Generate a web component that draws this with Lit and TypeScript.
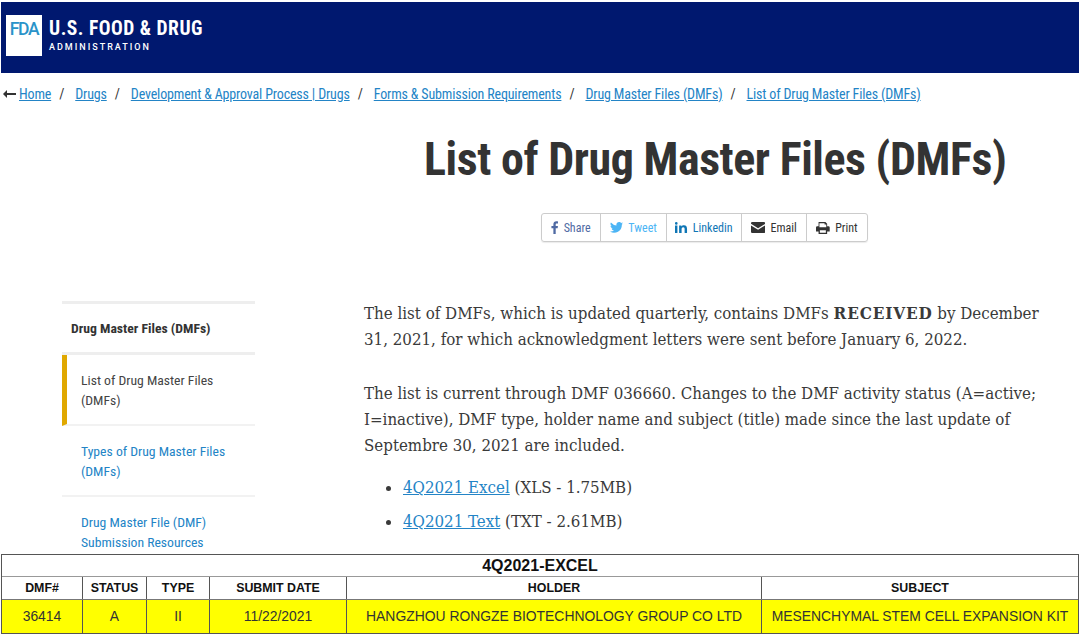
import { LitElement, html, css } from "lit";
import { customElement } from "lit/decorators.js";

@customElement("app-root")
export class AppRoot extends LitElement {
  static styles = css`
    :host { display: flex; flex-direction: column; width: 1080px; height: 637px; overflow: hidden; background: #fff; box-sizing: border-box; font-family: Roboto, "Liberation Sans", sans-serif; color: #333; }
    a { color: #2384c6; }
    .banner { margin: 2px 1px 0; height: 71px; flex: none; background: #00186f; display: flex; align-items: flex-start; padding: 13px 0 0 5px; box-sizing: border-box; gap: 7px; color: #fff; }
    .logo { width: 36px; height: 41px; background: #fff; display: flex; align-items: center; justify-content: center; color: #2a93c9; font: 500 17.500px Roboto, sans-serif; letter-spacing: -1.300px; padding-bottom: 13px; box-sizing: border-box; }
    .wordmark { display: flex; flex-direction: column; }
    .agency { font: 700 19.500px/24px Roboto, sans-serif; font-stretch: 85%; letter-spacing: .5px; white-space: nowrap; margin-top: 2px; }
    .adm { font: 500 9px/10px Roboto, sans-serif; letter-spacing: 2px; margin-top: 1px; }
    .crumbs { flex: none; height: 42px; display: flex; align-items: center; padding: 0 0 0 2px; font-size: 14px; font-stretch: 75%; letter-spacing: -.16px; white-space: nowrap; }
    .arrow { width: 14px; height: 10px; margin-right: 3px; color: #333; }
    .sep { margin: 0 11px 0 8px; }
    h1 { flex: none; margin: 0; height: 98px; width: 1080px; padding: 9px 0 0 424px; box-sizing: border-box; font: 700 46px/70px Roboto, sans-serif; font-stretch: 75%; letter-spacing: -.45px; color: #333; white-space: nowrap; }
    .share { flex: none; margin: 0 0 0 541px; height: 27px; width: fit-content; display: flex; border: 1px solid #ccc; border-radius: 3px; font-size: 12px; font-stretch: 75%; box-shadow: 0 1px 1px rgba(0,0,0,.08); }
    .share span { display: flex; align-items: center; justify-content: center; gap: 5px; border-left: 1px solid #ccc; white-space: nowrap; }
    .share span:first-child { border-left: 0; }
    .share svg { display: block; flex: none; }
    .fb { color: #4f6aa3; width: 58px; } .tw { color: #4cb5f5; width: 65px; } .li { color: #0f76b5; width: 74px; } .em { color: #333; width: 64px; } .pr { color: #333; width: 60px; }
    .fb svg { height: 13px; } .tw svg { height: 11px; } .li svg { height: 11px; } .em svg { height: 11px; } .pr svg { height: 12px; }
    .main { flex: 1; min-height: 0; overflow: hidden; display: grid; grid-template-columns: 193px 1fr; column-gap: 109px; padding: 59px 0 0 62px; }
    .side { font-size: 13.700px; font-stretch: 75%; line-height: 20.300px; }
    .side-head { border-top: 3px solid #eee; border-bottom: 3px solid #eee; height: 48px; display: flex; align-items: center; padding-left: 9px; font-weight: 700; color: #333; }
    .side-item { padding: 15px 20px 13px 19px; border-bottom: 2px solid #f2f2f2; color: #2384c6; height: 41px; }
    .side-item.active { color: #444; border-left: 5px solid #e0a800; padding-left: 14px; }
    .body { font: 16.750px/26.300px "DejaVu Serif Condensed", "DejaVu Serif", serif; width: 680px; color: #3a3a3a; }
    .body b { font-size: 17px; letter-spacing: .85px; }
    .body p { margin: 0 0 27px; }
    .body p.first { margin-top: -1px; }
    .body p.last { margin-bottom: 16px; }
    ul { margin: 0; padding-left: 39px; }
    li { margin-bottom: 7.500px; }
    .bar { flex: none; margin: 0 1px 3px; border: 1px solid #555; font-family: "Liberation Sans", Arial, sans-serif; color: #111; box-sizing: border-box; background: #fff; }
    .t-title { height: 22px; text-align: center; font-weight: 700; font-size: 16px; line-height: 22px; border-bottom: 1px solid #999; box-sizing: border-box; }
    .t-row { display: grid; grid-template-columns: 80px 64px 63px 137px 415px 1fr; }
    .t-row > div { display: flex; align-items: center; justify-content: center; border-left: 1px solid #555; white-space: nowrap; }
    .t-row > div:first-child { border-left: 0; }
    .t-head { height: 23px; font-weight: 700; font-size: 12.400px; border-bottom: 1px solid #777; box-sizing: border-box; }
    .t-data { height: 33px; font-size: 13.900px; background: #ff0; box-sizing: border-box; color: #333; }
    .t-data > div { padding-bottom: 2px; box-sizing: border-box; }
  `;

  render() {
    const crumbs = ["Drugs", "Development & Approval Process | Drugs", "Forms & Submission Requirements", "Drug Master Files (DMFs)", "List of Drug Master Files (DMFs)"];
    return html`
      <div class="banner">
        <div class="logo">FDA</div>
        <div class="wordmark">
          <div class="agency">U.S. FOOD &amp; DRUG</div>
          <div class="adm">ADMINISTRATION</div>
        </div>
      </div>
      <nav class="crumbs">
        <svg class="arrow" viewBox="0 0 14 10"><path d="M5 1 1 5l4 4V6h9V4H5z" fill="currentColor"/></svg>
        <a href="#">Home</a><span class="sep">/</span>
        ${crumbs.map((c, i) => html`<a href="#">${c}</a>${i < crumbs.length - 1 ? html`<span class="sep">/</span>` : ""}`)}
      </nav>
      <h1>List of Drug Master Files (DMFs)</h1>
      <div class="share">
        <span class="fb"><svg viewBox="0 0 10 18"><path fill="currentColor" d="M6.500 18V10h2.700l.4-3.100H6.500V4.900c0-.9.3-1.500 1.600-1.500h1.600V.6C9.400.6 8.400.5 7.300.5 4.900.5 3.300 2 3.300 4.600V6.900H.6V10h2.700v8z"/></svg>Share</span>
        <span class="tw"><svg viewBox="0 0 24 20"><path fill="currentColor" d="M24 2.400a9.800 9.800 0 0 1-2.800.8A5 5 0 0 0 23.300.5a9.800 9.800 0 0 1-3.100 1.200 4.900 4.900 0 0 0-8.400 4.500A14 14 0 0 1 1.700 1a4.900 4.900 0 0 0 1.500 6.600 4.900 4.900 0 0 1-2.200-.6c0 2.400 1.700 4.400 3.900 4.900a4.900 4.900 0 0 1-2.200.1 4.900 4.900 0 0 0 4.600 3.400A9.900 9.900 0 0 1 0 17.400 14 14 0 0 0 21.500 5c1-.7 1.900-1.600 2.500-2.600z"/></svg>Tweet</span>
        <span class="li"><svg viewBox="0 0 18 16"><path fill="currentColor" d="M0 5h3.500v11H0zM1.800 0a2 2 0 1 1 0 4 2 2 0 0 1 0-4zM6 5h3.300v1.500C10 5.400 11.300 4.700 13 4.700c3.500 0 4.500 2.200 4.500 5.300v6H14v-5.300c0-1.500-.3-2.900-2-2.900s-2.400 1.200-2.400 2.900V16H6z"/></svg>Linkedin</span>
        <span class="em"><svg viewBox="0 0 18 14"><path fill="currentColor" d="M1.500 0h15A1.500 1.500 0 0 1 18 1.500v.8L9 8 0 2.300v-.8A1.500 1.500 0 0 1 1.500 0zM0 4.300 9 10l9-5.700v8.200a1.500 1.500 0 0 1-1.500 1.500h-15A1.500 1.500 0 0 1 0 12.500z"/></svg>Email</span>
        <span class="pr"><svg viewBox="0 0 16 14"><path fill="currentColor" fill-rule="evenodd" d="M3 0h8l2 2v3h1.500A1.500 1.500 0 0 1 16 6.500V11h-3v3H3v-3H0V6.500A1.500 1.500 0 0 1 1.500 5H3zm1 1.500V6h8V3h-2V1.500zM4.500 9.500V12.500h7V9.500z"/></svg>Print</span>
      </div>
      <div class="main">
        <aside class="side">
          <div class="side-head">Drug Master Files (DMFs)</div>
          <div class="side-item active">List of Drug Master Files (DMFs)</div>
          <div class="side-item">Types of Drug Master Files (DMFs)</div>
          <div class="side-item">Drug Master File (DMF) Submission Resources</div>
        </aside>
        <article class="body">
          <p class="first">The list of DMFs, which is updated quarterly, contains DMFs <b>RECEIVED</b> by December 31, 2021, for which acknowledgment letters were sent before January 6, 2022.</p>
          <p class="last">The list is current through DMF 036660. Changes to the DMF activity status (A=active; I=inactive), DMF type, holder name and subject (title) made since the last update of Septembre 30, 2021 are included.</p>
          <ul>
            <li><a href="#">4Q2021 Excel</a> (XLS - 1.75MB)</li>
            <li><a href="#">4Q2021 Text</a> (TXT - 2.61MB)</li>
          </ul>
        </article>
      </div>
      <section class="bar">
        <div class="t-title">4Q2021-EXCEL</div>
        <div class="t-row t-head"><div>DMF#</div><div>STATUS</div><div>TYPE</div><div>SUBMIT DATE</div><div>HOLDER</div><div>SUBJECT</div></div>
        <div class="t-row t-data"><div>36414</div><div>A</div><div>II</div><div>11/22/2021</div><div>HANGZHOU RONGZE BIOTECHNOLOGY GROUP CO LTD</div><div>MESENCHYMAL STEM CELL EXPANSION KIT</div></div>
      </section>
    `;
  }
}
